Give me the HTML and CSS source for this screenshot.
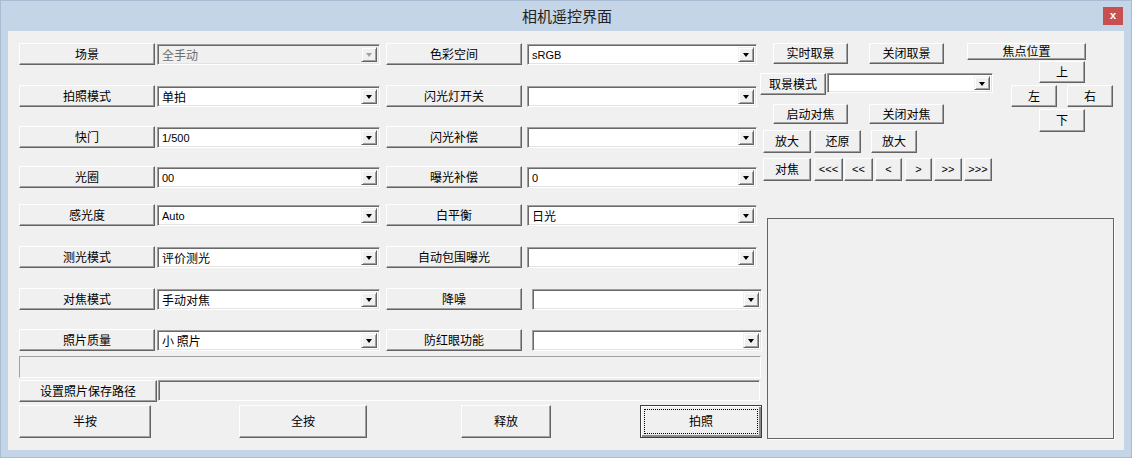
FILE: index.html
```html
<!DOCTYPE html>
<html lang="zh-CN">
<head>
<meta charset="utf-8">
<title>相机遥控界面</title>
<link rel="stylesheet" href="styles.css">
</head>
<body>
<div class="window">
  <div class="titlebar">
    <span class="title">相机遥控界面</span>
    <span class="close">x</span>
  </div>
  <div class="client">
    <div class="left">
      <div class="grid">
        <div class="btn">场景</div>
        <div class="combo disabled"><span class="val">全手动</span><span class="drop"></span></div>
        <div class="btn">色彩空间</div>
        <div class="combo"><span class="val latin">sRGB</span><span class="drop"></span></div>

        <div class="btn">拍照模式</div>
        <div class="combo"><span class="val">单拍</span><span class="drop"></span></div>
        <div class="btn">闪光灯开关</div>
        <div class="combo"><span class="val"></span><span class="drop"></span></div>

        <div class="btn">快门</div>
        <div class="combo"><span class="val latin">1/500</span><span class="drop"></span></div>
        <div class="btn">闪光补偿</div>
        <div class="combo"><span class="val"></span><span class="drop"></span></div>

        <div class="btn">光圈</div>
        <div class="combo"><span class="val latin">00</span><span class="drop"></span></div>
        <div class="btn">曝光补偿</div>
        <div class="combo"><span class="val latin">0</span><span class="drop"></span></div>

        <div class="btn">感光度</div>
        <div class="combo"><span class="val latin">Auto</span><span class="drop"></span></div>
        <div class="btn">白平衡</div>
        <div class="combo"><span class="val">日光</span><span class="drop"></span></div>

        <div class="btn">测光模式</div>
        <div class="combo"><span class="val">评价测光</span><span class="drop"></span></div>
        <div class="btn">自动包围曝光</div>
        <div class="combo"><span class="val"></span><span class="drop"></span></div>

        <div class="btn">对焦模式</div>
        <div class="combo"><span class="val">手动对焦</span><span class="drop"></span></div>
        <div class="btn">降噪</div>
        <div class="combo shift"><span class="val"></span><span class="drop"></span></div>

        <div class="btn">照片质量</div>
        <div class="combo"><span class="val">小 照片</span><span class="drop"></span></div>
        <div class="btn">防红眼功能</div>
        <div class="combo shift"><span class="val"></span><span class="drop"></span></div>
      </div>
      <div class="strip"></div>
      <div class="path-row">
        <div class="btn path-btn">设置照片保存路径</div>
        <div class="edit"></div>
      </div>
      <div class="action-row">
        <div class="btn big b1">半按</div>
        <div class="btn big b2">全按</div>
        <div class="btn big b3">释放</div>
        <div class="btn big b4 default"><span class="focus">拍照</span></div>
      </div>
    </div>
    <div class="right">
      <div class="right-top">
        <div class="ctrl-col">
          <div class="row ra">
            <div class="btn w75 ml13">实时取景</div>
            <div class="btn w75 ml21">关闭取景</div>
          </div>
          <div class="row rb">
            <div class="btn w66">取景模式</div>
            <div class="combo small"><span class="val"></span><span class="drop"></span></div>
          </div>
          <div class="row rc">
            <div class="btn w75 ml13">启动对焦</div>
            <div class="btn w75 ml21">关闭对焦</div>
          </div>
          <div class="row rd">
            <div class="btn w48 ml3">放大</div>
            <div class="btn w47 ml3">还原</div>
            <div class="btn w46 ml10">放大</div>
          </div>
          <div class="row re">
            <div class="btn w48 ml3">对焦</div>
            <div class="btn w29 ml3 latin">&lt;&lt;&lt;</div>
            <div class="btn w29 ml1 latin">&lt;&lt;</div>
            <div class="btn w27 ml2 latin">&lt;</div>
            <div class="btn w27 ml3 latin">&gt;</div>
            <div class="btn w28 ml2 latin">&gt;&gt;</div>
            <div class="btn w28 ml2 latin">&gt;&gt;&gt;</div>
          </div>
        </div>
        <div class="dpad">
          <div class="btn focus-pos">焦点位置</div>
          <div class="btn dir up">上</div>
          <div class="lr">
            <div class="btn dir">左</div>
            <div class="btn dir ml10">右</div>
          </div>
          <div class="btn dir down">下</div>
        </div>
      </div>
      <div class="picture"></div>
    </div>
  </div>
</div>
</body>
</html>
```

FILE: styles.css
```css
html, body {
  margin: 0;
  padding: 0;
  overflow: hidden;
}
body {
  background: #c4d5e8;
  font-family: "Noto Sans CJK SC", "Liberation Sans", sans-serif;
  font-size: 12px;
  color: #000;
}
.window {
  width: 1132px;
  height: 458px;
  box-sizing: border-box;
  background: #c4d5e8;
  border: 1px solid #a9bcd3;
}
.titlebar {
  height: 30px;
  display: flex;
  align-items: center;
  justify-content: center;
  position: relative;
}
.title {
  font-size: 15px;
  color: #222;
  margin-top: -1px;
  margin-left: 2px;
}
.close {
  position: absolute;
  right: 8px;
  top: 6px;
  width: 20px;
  height: 18px;
  background: #c75050;
  color: #fff;
  font-family: "Liberation Sans", sans-serif;
  font-weight: bold;
  font-size: 11px;
  line-height: 16px;
  text-align: center;
}
.client {
  margin: 0 7px;
  height: 419px;
  box-sizing: border-box;
  background: #f0f0f0;
  padding: 12px 0 0 11px;
  display: flex;
  align-items: flex-start;
}
.left {
  width: 741px;
  flex: none;
}
.grid {
  display: grid;
  grid-template-columns: 138px 229px 141px 230px;
  grid-template-rows: 42px 41px 40px 38px 42px 42px 41px 24px;
  align-items: start;
}
.btn {
  flex: none;
  box-sizing: border-box;
  height: 22px;
  background: #f0f0f0;
  border: 1px solid;
  border-color: #ffffff #646464 #646464 #ffffff;
  box-shadow: inset -1px -1px 0 #a0a0a0;
  display: flex;
  align-items: center;
  justify-content: center;
  white-space: nowrap;
  font-size: 12px;
  line-height: 1;
  padding-bottom: 1px;
}
.grid .btn {
  width: 136px;
}
.combo {
  flex: none;
  box-sizing: border-box;
  height: 21px;
  margin-top: 1px;
  background: #fff;
  border: 1px solid;
  border-color: #a0a0a0 #ffffff #ffffff #a0a0a0;
  box-shadow: inset 1px 1px 0 #696969, inset -1px -1px 0 #e3e3e3;
  display: flex;
  align-items: center;
  padding: 2px 2px 2px 4px;
}
.grid .combo:nth-child(4n+2) {
  width: 223px;
}
.grid .combo:nth-child(4n) {
  width: 230px;
}
.grid .combo.shift {
  margin-left: 5px;
}
.combo .val {
  flex: 1;
  white-space: nowrap;
  overflow: hidden;
  font-size: 12px;
}
.latin {
  font-family: "Liberation Sans", "Noto Sans CJK SC", sans-serif;
  font-size: 11px !important;
}
.drop {
  flex: none;
  width: 16px;
  height: 15px;
  box-sizing: border-box;
  background: #f0f0f0;
  border: 1px solid;
  border-color: #f0f0f0 #646464 #646464 #f0f0f0;
  box-shadow: inset 1px 1px 0 #fff, inset -1px -1px 0 #a0a0a0;
  display: flex;
  align-items: center;
  justify-content: center;
}
.drop::after {
  content: "";
  width: 0;
  height: 0;
  border-left: 3.5px solid transparent;
  border-right: 3.5px solid transparent;
  border-top: 4px solid #000;
  margin-top: 1px;
}
.combo.disabled {
  background: #f0f0f0;
  color: #6d6d6d;
}
.combo.disabled .drop::after {
  border-top-color: #a0a0a0;
}
.strip {
  box-sizing: border-box;
  width: 742px;
  height: 22px;
  margin-top: 3px;
  border: 1px solid;
  border-color: #a0a0a0 #ffffff #ffffff #a0a0a0;
}
.path-row {
  display: flex;
  margin-top: 2px;
  height: 22px;
}
.path-btn {
  width: 138px;
}
.edit {
  flex: none;
  box-sizing: border-box;
  width: 602px;
  height: 21px;
  margin-left: 1px;
  border: 1px solid;
  border-color: #a0a0a0 #ffffff #ffffff #a0a0a0;
  box-shadow: inset 1px 1px 0 #696969;
  background: #f0f0f0;
}
.action-row {
  display: flex;
  margin-top: 3px;
}
.btn.big {
  height: 33px;
}
.b1 { width: 132px; }
.b2 { width: 128px; margin-left: 88px; }
.b3 { width: 90px; margin-left: 94px; }
.b4 { width: 122px; margin-left: 89px; }
.btn.default {
  border: 1px solid #3c3c3c;
  box-shadow: inset 1px 1px 0 #fff, inset -2px -2px 0 #8a8a8a;
  padding: 3px;
}
.focus {
  flex: 1;
  align-self: stretch;
  display: flex;
  align-items: center;
  justify-content: center;
  border: 1px dotted #000;
  padding-bottom: 1px;
}
.right {
  flex: none;
  display: flex;
  flex-direction: column;
}
.right-top {
  display: flex;
}
.ctrl-col {
  width: 207px;
  flex: none;
}
.row {
  display: flex;
}
.ra { height: 21px; }
.ra .btn { height: 21px; }
.rb { height: 22px; margin-top: 9px; }
.rb .btn { height: 22px; }
.combo.small {
  width: 166px;
  height: 20px;
  margin: 0 0 0 1px;
}
.combo.small .drop { height: 14px; }
.rc { height: 20px; margin-top: 9px; }
.rc .btn { height: 20px; }
.rd { height: 23px; margin-top: 6px; }
.rd .btn { height: 23px; }
.re { height: 23px; margin-top: 5px; }
.re .btn { height: 23px; }
.w75 { width: 75px; }
.w66 { width: 66px; }
.w48 { width: 48px; }
.w47 { width: 47px; }
.w46 { width: 46px; }
.w29 { width: 29px; }
.w28 { width: 28px; }
.w27 { width: 27px; }
.ml1 { margin-left: 1px; }
.ml2 { margin-left: 2px; }
.ml3 { margin-left: 3px; }
.ml10 { margin-left: 10px; }
.ml13 { margin-left: 13px; }
.ml21 { margin-left: 21px; }
.dpad {
  width: 146px;
  flex: none;
  display: flex;
  flex-direction: column;
}
.focus-pos {
  width: 119px;
  height: 17px;
}
.dir {
  width: 46px;
  height: 22px;
}
.up {
  margin-top: 1px;
  margin-left: 72px;
}
.lr {
  display: flex;
  margin-top: 2px;
  margin-left: 44px;
}
.down {
  margin-top: 2px;
  margin-left: 72px;
  height: 23px;
}
.picture {
  box-sizing: border-box;
  width: 347px;
  height: 221px;
  margin-top: 37px;
  margin-left: 7px;
  border: 1px solid #646464;
  box-shadow: 1px 1px 0 #fff;
}
```
